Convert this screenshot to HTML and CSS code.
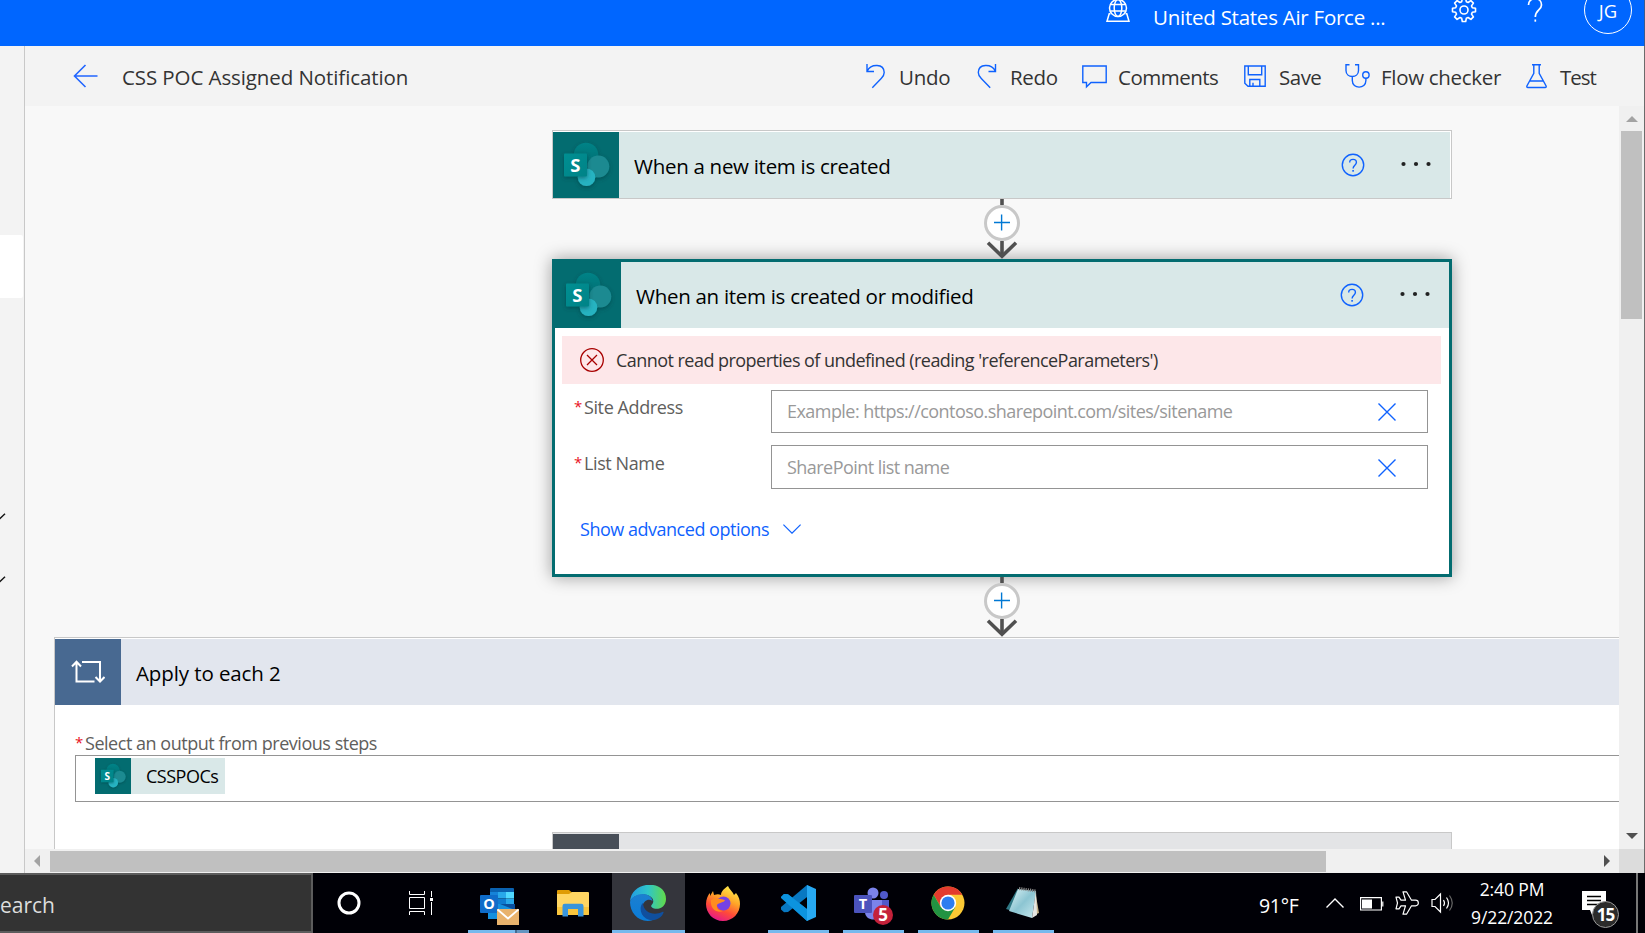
FILE: index.html
```html
<!DOCTYPE html>
<html lang="en">
<head>
<meta charset="utf-8">
<title>CSS POC Assigned Notification</title>
<link rel="stylesheet" href="styles.css">
</head>
<body>
<svg class="defs" width="0" height="0" aria-hidden="true">
  <defs>
    <linearGradient id="spBox" x1="0" y1="0" x2="1" y2="1"><stop offset="0" stop-color="#058f92"/><stop offset="1" stop-color="#038387"/></linearGradient>
    <linearGradient id="spTop" x1="0" y1="0" x2="0" y2="1"><stop offset="0" stop-color="#058387"/><stop offset="1" stop-color="#036c70"/></linearGradient>
    <filter id="spShadow" x="-30%" y="-30%" width="160%" height="160%"><feDropShadow dx="0" dy="1.5" stdDeviation="2" flood-color="#003b3d" flood-opacity=".55"/></filter>
    <symbol id="sharepoint" viewBox="0 0 66 66">
      <g filter="url(#spShadow)">
        <circle cx="33" cy="23" r="12.3" fill="url(#spTop)"/>
        <circle cx="45.300" cy="34.500" r="11" fill="#1a8a91"/>
        <circle cx="33.500" cy="45.300" r="8.800" fill="#28b3c1"/>
      </g>
      <rect x="11" y="21.500" width="23" height="23" rx="1" fill="url(#spBox)" filter="url(#spShadow)"/>
      <text x="22.400" y="39.600" text-anchor="middle" class="sp-letter">S</text>
    </symbol>
    <symbol id="help" viewBox="0 0 24 24">
      <circle cx="12" cy="12" r="10.700" fill="none" stroke="#0f62fe" stroke-width="1.400"/>
      <path d="M8.700 9.400c0-4.100 6.700-4.100 6.700 0 0 2.700-3.300 2.900-3.300 6" fill="none" stroke="#0f62fe" stroke-width="1.400"/>
      <rect x="11.300" y="17" width="1.600" height="1.700" fill="#0f62fe"/>
    </symbol>
    <symbol id="dots" viewBox="0 0 30 6">
      <circle cx="2.500" cy="3" r="2.100"/><circle cx="15" cy="3" r="2.100"/><circle cx="27.500" cy="3" r="2.100"/>
    </symbol>
    <symbol id="clear" viewBox="0 0 18 18"><path d="M.5.5l17 17M17.500.5l-17 17" fill="none" stroke="#0f62fe" stroke-width="1.400"/></symbol>
    <symbol id="connector" viewBox="0 0 36 60">
      <path d="M18 0v6M18 42v14" stroke="#505050" stroke-width="3.600"/>
      <path d="M4 43.800L18 57.300 32 43.800" fill="none" stroke="#505050" stroke-width="3.600"/>
      <circle cx="18" cy="24" r="16.500" fill="#fff" stroke="#c8c8c8" stroke-width="3"/>
      <path d="M10 23.500h16M17.600 15.500v16" stroke="#0078d4" stroke-width="1.400"/>
    </symbol>
  </defs>
</svg>

<header class="suite">
  <svg class="env" width="24" height="24" viewBox="0 0 24 24" fill="none" stroke="#fff" stroke-width="1.500"><circle cx="12" cy="9" r="8.500"/><ellipse cx="12" cy="9" rx="3.800" ry="8.500"/><path d="M4.300 5.500h15.400M4.300 12h15.400M4.500 14.700H3.200L1 22.300h22l-2.200-7.600h-1.300"/></svg>
  <span class="tenant">United States Air Force ...</span>
  <svg class="gear" width="26" height="26" viewBox="0 0 26 26" fill="none" stroke="#fff" stroke-width="1.600" stroke-linejoin="round"><circle cx="13" cy="13" r="4"/><path d="M11.300 1.500h3.400l.6 3.200 1.800.8 2.800-1.900 2.500 2.500-1.900 2.800.8 1.800 3.200.6v3.400l-3.200.6-.8 1.800 1.900 2.800-2.500 2.500-2.800-1.900-1.800.8-.6 3.200h-3.400l-.6-3.200-1.800-.8-2.800 1.900-2.500-2.500 1.900-2.800-.8-1.800-3.200-.6v-3.400l3.200-.6.8-1.800-1.900-2.800 2.500-2.500 2.800 1.900 1.800-.8z"/></svg>
  <svg class="ask" width="16" height="26" viewBox="0 0 16 26" fill="none" stroke="#fff" stroke-width="1.700"><path d="M1.500 8c0-8.500 13-8.500 13 0 0 5-6.200 5.200-6.200 12"/><path d="M8.300 22.500v2.200"/></svg>
  <span class="avatar">JG</span>
</header>

<div class="app">
  <nav class="rail">
    <div class="rail-active"></div>
    <svg class="rail-chevron first" width="6" height="7" viewBox="0 0 6 7"><path d="M-1 6.500L5 .8" stroke="#111" stroke-width="1.400"/></svg>
    <svg class="rail-chevron" width="6" height="7" viewBox="0 0 6 7"><path d="M-1 6.500L5 .8" stroke="#111" stroke-width="1.400"/></svg>
  </nav>

  <main class="designer">
    <div class="toolbar">
      <svg class="back" width="25" height="24" viewBox="0 0 25 24" fill="none" stroke="#2266ff" stroke-width="1.600"><path d="M24.500 12H1.500M12.500 1L1.500 12l11 11"/></svg>
      <h1 class="flow-title">CSS POC Assigned Notification</h1>
      <div class="commands">
        <svg width="20" height="25" viewBox="0 0 20 25"><path d="M1 0v7.500h7M1.300 7C5-.5 18-.5 18.200 8.500c0 3-1.500 4.600-3 6.100L6.300 23.700"/></svg><span>Undo</span>
        <svg width="20" height="25" viewBox="0 0 20 25"><path d="M18.500 0v7.500h-7M18.200 7C14.500-.5 1.500-.5 1.300 8.500c0 3 1.500 4.600 3 6.100l8.900 9.100"/></svg><span>Redo</span>
        <svg width="25" height="25" viewBox="0 0 25 25"><path d="M.8 2h23.400v16.500H9L4.500 22.800v-4.300H.8z"/></svg><span class="tight">Comments</span>
        <svg width="22" height="25" viewBox="0 0 22 25"><path d="M.8 2h20.400v20.200H4L.8 19.200zM4.300 2v8.800h13.400V2M5.800 22v-6.500h10V22M9 22v-3.300"/></svg><span class="tight">Save</span>
        <svg width="25" height="25" viewBox="0 0 25 25"><path d="M4.500.8H1v5.700c0 8 12.500 8 12.500 0V.8H10M7.300 12.500v4c0 8.800 13.600 8.800 13.600 0v-2.300"/><circle cx="20.900" cy="11" r="3.200"/></svg><span>Flow checker</span>
        <svg width="21" height="25" viewBox="0 0 21 25"><path d="M6 .8h9M7.800.8v8.500L.9 22c-.3.900.1 1.500.9 1.500h17.400c.8 0 1.200-.6.900-1.500L13.200 9.300V.8M3.700 17h13.600"/></svg><span class="tighter">Test</span>
      </div>
    </div>

    <div class="viewport">
      <div class="canvas">
        <section class="card trigger">
          <div class="card-head">
            <svg class="card-icon"><use href="#sharepoint"/></svg>
            <span class="card-title">When a new item is created</span>
            <svg class="help"><use href="#help"/></svg>
            <svg class="dots"><use href="#dots"/></svg>
          </div>
        </section>
        <svg class="connector"><use href="#connector"/></svg>
        <section class="card selected">
          <div class="card-head">
            <svg class="card-icon"><use href="#sharepoint"/></svg>
            <span class="card-title">When an item is created or modified</span>
            <svg class="help"><use href="#help"/></svg>
            <svg class="dots"><use href="#dots"/></svg>
          </div>
          <div class="error">
            <svg width="24" height="24" viewBox="0 0 24 24" fill="none" stroke="#a80000" stroke-width="1.300"><circle cx="12" cy="12" r="11.300"/><path d="M7 7l10 10M17 7L7 17"/></svg>
            <span>Cannot read properties of undefined (reading 'referenceParameters')</span>
          </div>
          <div class="field">
            <label class="label"><i class="req">*</i><span>Site Address</span></label>
            <div class="input"><span>Example: https://contoso.sharepoint.com/sites/sitename</span><svg class="clear"><use href="#clear"/></svg></div>
          </div>
          <div class="field second">
            <label class="label"><i class="req">*</i><span>List Name</span></label>
            <div class="input"><span>SharePoint list name</span><svg class="clear"><use href="#clear"/></svg></div>
          </div>
          <div class="advanced"><span>Show advanced options</span><svg width="18" height="10" viewBox="0 0 18 10" fill="none" stroke="#0f62fe" stroke-width="1.200"><path d="M.4.6L9 9.200 17.600.6"/></svg></div>
        </section>
        <svg class="connector"><use href="#connector"/></svg>
      </div>

      <section class="loop">
        <div class="loop-head">
          <div class="loop-icon"><svg width="34" height="24" viewBox="0 0 34 24" fill="none" stroke="#fff" stroke-width="2"><path d="M5.500 2v19.500h18M11 2h18v19M1 6.500L5.500 1.800 10 6.500M24.500 17L29 21.500l4.500-4.500"/></svg></div>
          <span class="card-title">Apply to each 2</span>
        </div>
        <div class="loop-body">
          <label class="label"><i class="req">*</i><span>Select an output from previous steps</span></label>
          <div class="token-input">
            <span class="token"><svg class="token-icon"><use href="#sharepoint"/></svg><span>CSSPOCs</span></span>
          </div>
          <div class="nested"><div class="nested-icon"></div></div>
        </div>
      </section>
    </div>

    <div class="vscroll">
      <svg width="12" height="6" viewBox="0 0 12 6"><path d="M6 0l6 6H0z" fill="#a3a3a3"/></svg>
      <div class="vthumb"></div>
      <svg class="down" width="12" height="6" viewBox="0 0 12 6"><path d="M0 0h12L6 6z" fill="#505050"/></svg>
    </div>
    <div class="hscroll">
      <svg width="6" height="12" viewBox="0 0 6 12"><path d="M6 0v12L0 6z" fill="#a3a3a3"/></svg>
      <div class="hthumb"></div>
      <svg class="right" width="6" height="12" viewBox="0 0 6 12"><path d="M0 0v12l6-6z" fill="#505050"/></svg>
    </div>
    <div class="corner"></div>
  </main>
</div>

<footer class="taskbar">
  <div class="search">earch</div>
  <div class="tiles">
    <div class="tile"><svg width="24" height="24" viewBox="0 0 24 24"><circle cx="12" cy="12" r="10" fill="none" stroke="#fff" stroke-width="3"/></svg></div>
    <div class="tile task-view"><svg width="24" height="24" viewBox="0 0 24 24" fill="none" stroke="#fff"><path d="M.5 0v3.500h15V0M.5 6.500h15v11H.5zM.5 24v-3.500h15V24M22.500 0v6M22.500 11v13"/><path d="M21 7h3v3h-3z" fill="#fff" stroke="none"/></svg></div>
    <div class="tile running grouped">
      <svg width="39" height="38" viewBox="0 0 39 38"><path d="M10 2q0-1 1-1h22q1 0 1 1v8H10z" fill="#0a62b0"/><path d="M10 5h8v13h-8z" fill="#1683d8"/><path d="M18 5h8v6.500h-8z" fill="#28a8ea"/><path d="M26 5h8v6.500h-8z" fill="#50d9ff"/><path d="M18 11.500h8V18h-8z" fill="#0f7bd0"/><path d="M26 11.500h8V18h-8z" fill="#28a8ea"/><path d="M8 17h27v15H8z" fill="#1490df"/><path d="M20 17h15v6z" fill="#0a4f9c"/><rect y="8" width="18" height="18" rx="1" fill="#0f6cc9"/><text x="9" y="22.300" text-anchor="middle" class="app-letter">O</text><path d="M17 22h22v16H17z" fill="#e8b26c"/><path d="M17.500 22.500l10.500 9 10.500-9" fill="none" stroke="#fff" stroke-width="1.800"/></svg>
    </div>
    <div class="tile nudge"><svg width="32" height="28" viewBox="0 0 32 28"><path d="M0 1.500Q0 1 1 1h11l3 2.500L12 7H0z" fill="#df9c05"/><path d="M0 5h12l3-2h16q1 0 1 1v21q0 1-1 1H0z" fill="#ffd663"/><path d="M0 18h32v7q0 1-1 1H0z" fill="#f9c53d"/><path d="M5.500 27.500V17q0-2.200 2.200-2.200h16.600q2.200 0 2.200 2.200v10.500H21V20H11v7.500z" fill="#3995dc"/></svg></div>
    <div class="tile running active nudge">
      <svg width="36" height="36" viewBox="0 0 36 36"><defs><linearGradient id="eg" x1="0" y1=".5" x2="1" y2=".5"><stop offset="0" stop-color="#229be3"/><stop offset=".5" stop-color="#2fc5c9"/><stop offset="1" stop-color="#62da48"/></linearGradient><linearGradient id="eb" x1="0" y1="0" x2="0" y2="1"><stop offset="0" stop-color="#1c7fd0"/><stop offset="1" stop-color="#0a7cd8"/></linearGradient></defs><path d="M0 17C1-5 36-6 36 14c0 8-7 11-12 9.500-3-1-3.500-2.500-2-4 4-5-2-10-8-10-7 0-13 3-14 7.500z" fill="url(#eg)"/><path d="M0 17c1-5 7-8 13-8 5 0 9 3 9.500 7-4-3-9 0-10 5-1 8 5 13 10 14.300C9 38.500 0 28 0 17z" fill="url(#eb)"/><path d="M13 18c-4 3-3 12 3 15.500 8 4.500 16-1 17.500-5.800.3-1-.5-1-1.300-.6C24 31 13.500 28 13 18z" fill="#104f9e"/></svg>
    </div>
    <div class="tile nudge"><svg width="34" height="35" viewBox="0 0 34 35"><defs><linearGradient id="ff" x1=".8" y1="0" x2=".35" y2="1"><stop offset="0" stop-color="#fff44f"/><stop offset=".4" stop-color="#ffa427"/><stop offset=".7" stop-color="#ff4b38"/><stop offset="1" stop-color="#e4188a"/></linearGradient></defs><path d="M22 0c1 3 5 6 6 9l2-2c3 4 4 7 4 11 0 9-7 17-17 17S0 27 0 18c0-5 2-9 4-11v3l3-5 1 4c3-1 5-1 7 0 0-4 4-7 7-9z" fill="url(#ff)"/><circle cx="17.500" cy="17.500" r="7" fill="#7542e5"/><path d="M5 14c4-3 9-1 14 0-1 3-6 2-8 5-1 3 2 6 6 6-9 3-13-5-12-11z" fill="#ff8d1f"/></svg></div>
    <div class="tile running nudge"><svg width="36" height="36" viewBox="0 0 36 36"><path d="M1 12l3-3 4 .2L33 29l-6 7z" fill="#0b8ad6"/><path d="M1 24.500l3 2.700 4-.2L36 5 27 0 1 22z" fill="#0878c2"/><path d="M1 12l3-3 4 .2L27 24v12L1 13z" fill="#0c93df"/><path d="M27 0l9 4v28l-9 4z" fill="#27a9f2"/></svg></div>
    <div class="tile running teams"><svg width="39" height="38" viewBox="0 0 39 38"><circle cx="19" cy="6" r="5.500" fill="#7b83eb"/><circle cx="30" cy="8" r="4" fill="#5059c9"/><path d="M25 13h10v10q0 6-6 6h-4z" fill="#5059c9"/><path d="M11 13h17v12c0 10-17 10-17 0z" fill="#7b83eb"/><rect y="8" width="18" height="18" rx="1" fill="#4b53bc"/><text x="9" y="22" text-anchor="middle" class="app-letter">T</text><circle cx="29" cy="28" r="10" fill="#c4213a"/><text x="29" y="34" text-anchor="middle" class="app-count">5</text></svg></div>
    <div class="tile running nudge"><svg width="34" height="34" viewBox="0 0 34 34"><circle cx="17" cy="17" r="16.500" fill="#fcc934"/><path d="M2.700 8.700A16.500 16.500 0 0 1 31.300 8.700H17L9.900 21z" fill="#e33b2e"/><path d="M2.700 8.700A16.500 16.500 0 0 0 17 33.500l7.200-12.300H9.900z" fill="#229342"/><circle cx="17" cy="17" r="8.200" fill="#fff"/><circle cx="17" cy="17" r="6.600" fill="#2c7df0"/></svg></div>
    <div class="tile running nudge"><svg width="34" height="32" viewBox="0 0 34 32"><defs><linearGradient id="np" x1="0" y1="0" x2="1" y2="1"><stop offset="0" stop-color="#e0f4f6"/><stop offset=".5" stop-color="#8cc5d2"/><stop offset="1" stop-color="#c9e9ef"/></linearGradient></defs><path d="M29 3l4 23-5 2z" fill="#c7b48a"/><path d="M12 1L0 22l10 3z" fill="#2f7784"/><path d="M12 2l18 2-4 27L3 24z" fill="url(#np)"/><path d="M30 4l1 24-5 3z" fill="#e6e6e2"/><path d="M13 1.500L30 4" stroke="#888" stroke-width="3" stroke-dasharray="1.200 1"/></svg></div>
  </div>
  <div class="tray">
    <span class="temp">91°F</span>
    <svg class="t-up" width="18" height="10" viewBox="0 0 18 10" fill="none" stroke="#fff" stroke-width="1.400"><path d="M.5 9.500L9 1l8.500 8.500"/></svg>
    <svg class="t-bat" width="24" height="14" viewBox="0 0 24 14" fill="none" stroke="#fff" stroke-width="1.200"><path d="M.6.6h20.800v12.400H.6zM22.800 4.500v5"/><path d="M2 2.500h10v9H2z" fill="#fff" stroke="none"/></svg>
    <svg class="t-air" width="24" height="24" viewBox="0 0 24 24" fill="none" stroke="#fff" stroke-width="1.200" stroke-linejoin="round"><path d="M8 .8h3.500l5 8.400h4c3.800 0 3.800 5.600 0 5.600h-4l-5 8.400H8l2.500-8.400H6l-2 3H1L2.500 12 1 6.200h3l2 3h4.500z"/></svg>
    <svg class="t-vol" width="24" height="22" viewBox="0 0 24 22" fill="none" stroke="#fff" stroke-width="1.200"><path d="M1 7.500h3L9.500 2v18L4 14.500H1z"/><path d="M12.500 8q2 3 0 6M15.500 5.500q4 5.500 0 11"/><path d="M18.500 3.500q5.500 7.500 0 15" stroke="#666"/></svg>
    <div class="clock"><span>2:40 PM</span><span>9/22/2022</span></div>
    <div class="notes"><svg width="24" height="25" viewBox="0 0 24 25"><path d="M0 0h24v19H13l-3 5-2-5H0z" fill="#fff"/><path d="M5 5.500h14M5 9.500h14M5 13.500h14" stroke="#000" stroke-width="1.300"/></svg><span class="badge">15</span></div>
    <div class="peek"></div>
  </div>
</footer>
</body>
</html>
```

FILE: styles.css
```css
* { box-sizing: border-box; }

body {
  margin: 0;
  width: 1645px;
  height: 933px;
  overflow: hidden;
  display: grid;
  grid-template-rows: 46px 827px 60px;
  font-family: "Open Sans", "Noto Sans", sans-serif;
  font-size: 20.5px;
  color: #333;
  white-space: nowrap;
}

svg { display: block; flex: none; }
.defs { position: absolute; }
.sp-letter { font: 700 18.500px "Open Sans", sans-serif; fill: #fff; }

/* suite header */
.suite {
  display: flex;
  align-items: flex-start;
  background: #0066ff;
  color: #fff;
  border-right: 1px solid #3b5b90;
}
.env { margin: -1px 0 0 1106px; }
.tenant { margin: 3px 0 0 23px; width: 298px; line-height: 29px; letter-spacing: -.25px; }
.gear { margin-top: -3px; }
.ask { margin: -3px 0 0 50px; }
.avatar {
  width: 48px;
  height: 48px;
  margin: -14px 0 0 41px;
  border: 1px solid #fff;
  border-radius: 50%;
  text-align: center;
  line-height: 48px;
  font-size: 18.500px;
}

/* frame */
.app {
  display: grid;
  grid-template-columns: 25px 1fr;
  background: #f3f3f3;
  border-right: 1px solid #6b6b6b;
  min-height: 0;
}
.rail { border-right: 1px solid #c8c8c8; padding-top: 189px; overflow: hidden; }
.rail-active { height: 63px; margin-right: 1px; background: #fff; border-radius: 0 2px 2px 0; }
.rail-chevron { margin-top: 56px; }
.rail-chevron.first { margin-top: 215px; }

.designer {
  display: grid;
  grid-template: 60px 743px 24px / 1594px 25px;
}
.toolbar { grid-column: 1 / -1; display: flex; align-items: center; }
.back { margin-left: 48px; }
.flow-title {
  margin: 2px 0 0 24px;
  width: 744px;
  font-size: 20.5px;
  font-weight: 400;
  letter-spacing: -.09px;
}
.commands {
  display: grid;
  align-items: center;
  grid-template-columns: 33px 78px 33px 72px 36px 126px 35px 66px 36px 145px 34px 41px;
}
.commands svg { fill: none; stroke: #0f62fe; stroke-width: 1.400; }
.commands span { padding-top: 2px; letter-spacing: -.3px; }
.commands .tight { letter-spacing: -.5px; }
.commands .tighter { letter-spacing: -1px; }

/* canvas */
.viewport { background: #f8f8f8; overflow: hidden; }
.canvas { width: 900px; margin: 24px 0 0 527px; }
.card { background: #fff; border: 1px solid #c8c8c8; }
.trigger { height: 69px; padding: 1px 1px 0 0; }
.card-head { height: 66px; display: flex; align-items: center; background: #d9e8e8; }
.card-icon { width: 66px; height: 66px; background: #036c70; }
.card-title { flex: 1; padding: 2px 0 0 15px; color: #000; letter-spacing: -.29px; }
.loop .card-title { letter-spacing: -.1px; }
.help { width: 24px; height: 24px; margin: -1px 36px 0 0; }
.dots { width: 30px; height: 6px; margin: -2px 19px 0 0; fill: #222; }
.connector { width: 36px; height: 60px; margin-left: 432px; position: relative; }

.selected { height: 318px; border: 3px solid #036c70; box-shadow: 0 0 16px rgba(0, 0, 0, .38); }
.error {
  height: 48px;
  margin: 8px 8px 0 7px;
  padding-left: 18px;
  display: flex;
  align-items: center;
  gap: 12px;
  background: #fde7e9;
  font-size: 18px;
  letter-spacing: -.54px;
}
.field { display: flex; height: 43px; margin: 6px 21px 0 19px; font-size: 18px; }
.field.second { margin-top: 12px; height: 44px; }
.label { display: flex; color: #605e5c; font-size: 18px; line-height: 24px; letter-spacing: -.47px; }
.req { width: 10px; font-style: normal; font-size: 15px; color: #e81123; line-height: 22px; }
.field .label { width: 197px; padding-top: 5px; letter-spacing: -.4px; }
.field.second .label { padding-top: 6px; }
.input {
  flex: 1;
  display: flex;
  align-items: center;
  justify-content: space-between;
  padding: 0 31px 0 15px;
  border: 1px solid #949494;
  color: #999;
  letter-spacing: -.55px;
}
.input span { margin-top: -1px; }
.clear { width: 18px; height: 18px; }
.second .clear { margin-top: 2px; }
.advanced {
  display: flex;
  align-items: center;
  gap: 14px;
  margin: 28px 0 0 25px;
  font-size: 18px;
  color: #0f62fe;
  letter-spacing: -.48px;
}
.advanced span { width: 189px; }

/* loop */
.loop {
  width: 1800px;
  height: 230px;
  margin-left: 29px;
  padding-top: 1px;
  background: #fff;
  border: 1px solid #c8c8c8;
}
.loop-head { height: 66px; display: flex; align-items: center; background: #e2e6ee; }
.loop-icon { width: 66px; height: 66px; display: grid; place-items: center; background: #486991; }
.loop-body { padding: 26px 0 0 20px; }
.token-input { height: 47px; padding: 2px 0 0 19px; border: 1px solid #949494; }
.token { display: flex; align-items: center; width: 130px; height: 36px; background: #d9e8e8; color: #000; font-size: 18px; letter-spacing: -.5px; }
.token-icon { width: 36px; height: 36px; margin-right: 15px; background: #036c70; }
.nested { width: 900px; height: 40px; margin: 30px 0 0 477px; padding-top: 1px; border: 1px solid #c8c8c8; background: #e3e4e6; }
.nested-icon { width: 66px; height: 38px; background: #484f58; }

/* scrollbars */
.vscroll { display: flex; flex-direction: column; align-items: center; padding: 10px 0; background: #f0f0f0; }
.vthumb { width: 21px; height: 188px; margin-top: 9px; background: #c0c0c0; }
.vscroll .down { margin-top: auto; }
.hscroll { display: flex; align-items: center; padding: 0 9px; background: #f0f0f0; }
.hthumb { width: 1276px; height: 21px; margin-left: 10px; background: #c0c0c0; }
.hscroll .right { margin-left: auto; }
.corner { background: #dcdcdc; }

/* taskbar */
.taskbar { display: flex; background: #000006; color: #fff; }
.search {
  width: 313px;
  border: 2px solid #5c5c5c;
  border-left: 0;
  background: #333;
  color: #ddd;
  line-height: 60px;
  font-size: 21px;
}
.tiles { display: flex; gap: 2px; width: 947px; margin-left: -1px; }
.tile { width: 73px; height: 60px; display: grid; place-items: center; position: relative; }
.tile.running::after { content: ""; position: absolute; left: 6px; bottom: 0; width: 61px; height: 3px; background: #76b9ed; }
.tile.grouped::after { background: linear-gradient(90deg, #76b9ed 47px, #436a90 47px 49px, #6394c0 49px); }
.tile.active { background: #34353c; }
.tile.active::after { left: 0; width: 73px; }
.tile.grouped svg, .tile.teams svg { margin-top: 5px; }
.tile.grouped svg { margin-left: 1px; }
.tile.task-view svg { margin: -1px 6px 0 0; }
.tile.nudge svg { margin-right: 2px; }
.app-letter { font: 700 14.500px "Open Sans", sans-serif; fill: #fff; }
.app-count { font: 700 17px "Open Sans", sans-serif; fill: #fff; }

.tray { display: flex; align-items: center; flex: 1; }
.temp { width: 67px; padding-top: 4px; font-size: 19.5px; letter-spacing: -.3px; }
.t-up { margin-right: 16px; }
.t-bat { margin: 1px 11px 0 0; }
.t-air { margin-right: 12px; }
.t-vol { margin-right: 13px; }
.clock { width: 88px; display: flex; flex-direction: column; align-items: center; font-size: 17.500px; line-height: 28px; letter-spacing: -.1px; }
.notes { position: relative; width: 24px; margin-left: 26px; }
.badge {
  position: absolute;
  left: 10px;
  top: 10px;
  width: 27px;
  height: 27px;
  border: 1px solid #999;
  border-radius: 50%;
  background: #2b2b2b;
  text-align: center;
  line-height: 25px;
  font-size: 17px;
  font-weight: 700;
  letter-spacing: -1px;
}
.peek { width: 2px; height: 60px; margin-left: 30px; background: #777; }
```
